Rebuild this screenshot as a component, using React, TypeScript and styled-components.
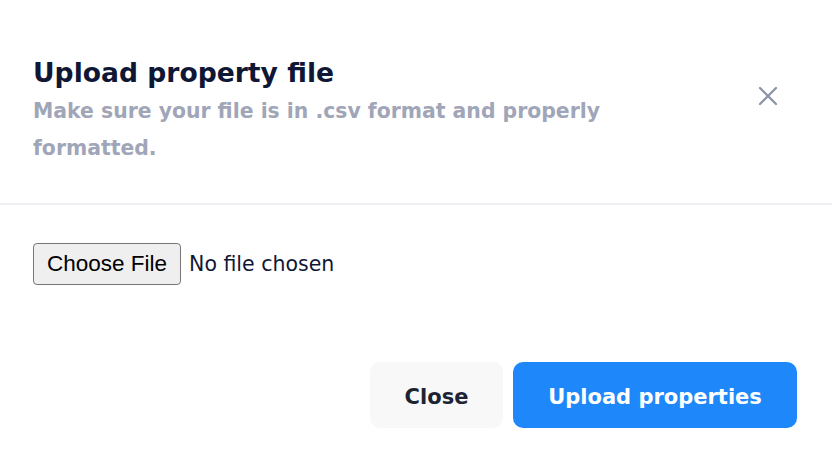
import React from "react";
import styled, { createGlobalStyle } from "styled-components";

const Global = createGlobalStyle`
  html, body { margin: 0; padding: 0; background: #ffffff; }
  body { font-family: "DejaVu Sans", "Open Sans", sans-serif; }
`;

const Modal = styled.div`
  width: 832px;
  height: 468px;
  background: #ffffff;
  display: flex;
  flex-direction: column;
  box-sizing: border-box;
`;

const Header = styled.header`
  display: flex;
  align-items: flex-start;
  justify-content: space-between;
  padding: 55px 50px 0 33px;
  height: 205px;
  box-sizing: border-box;
  border-bottom: 2px solid #eef0f3;
`;

const Titles = styled.div`
  display: flex;
  flex-direction: column;
  max-width: 610px;
`;

const Title = styled.h2`
  margin: 0;
  font-family: "DejaVu Sans", sans-serif;
  font-weight: 700;
  font-size: 26.6px;
  line-height: 36px;
  color: #0f1735;
`;

const Subtitle = styled.p`
  margin: 2px 0 0;
  font-family: "DejaVu Sans", sans-serif;
  font-weight: 700;
  font-size: 20.4px;
  line-height: 37px;
  color: #a0a6b8;
`;

const CloseIcon = styled.button`
  margin-top: 27px;
  width: 28px;
  height: 28px;
  border: none;
  background: transparent;
  padding: 0;
  display: flex;
  align-items: center;
  justify-content: center;
  cursor: pointer;
`;

const Body = styled.div`
  padding: 38px 33px 0;
  display: flex;
  align-items: center;
  gap: 8px;
`;

const FileButton = styled.label`
  display: inline-flex;
  align-items: center;
  justify-content: center;
  height: 42px;
  box-sizing: border-box;
  padding: 0 13px;
  background: #efefef;
  border: 1px solid #767676;
  border-radius: 4px;
  font-family: "Liberation Sans", Arial, sans-serif;
  font-size: 22.5px;
  color: #000000;
`;

const FileName = styled.span`
  font-family: "DejaVu Sans", sans-serif;
  font-size: 20.5px;
  color: #0f1735;
`;

const Footer = styled.footer`
  margin-top: auto;
  padding: 0 35px 40px;
  display: flex;
  justify-content: flex-end;
  gap: 10px;
`;

const Button = styled.button<{ $primary?: boolean }>`
  height: 66px;
  border: none;
  border-radius: 10px;
  padding: 3px 0 0;
  width: ${(p) => (p.$primary ? "284px" : "133px")};
  font-family: "DejaVu Sans", sans-serif;
  font-weight: 700;
  font-size: 21px;
  background: ${(p) => (p.$primary ? "#1e88fb" : "#f8f8f8")};
  color: ${(p) => (p.$primary ? "#ffffff" : "#1d2333")};
  cursor: pointer;
`;

export default function App() {
  return (
    <>
      <Global />
      <Modal>
        <Header>
          <Titles>
            <Title>Upload property file</Title>
            <Subtitle>Make sure your file is in .csv format and properly formatted.</Subtitle>
          </Titles>
          <CloseIcon aria-label="Close">
            <svg width="20" height="20" viewBox="0 0 20 20">
              <path d="M2 2 L18 18 M18 2 L2 18" stroke="#8b90a8" strokeWidth="2.2" strokeLinecap="round" />
            </svg>
          </CloseIcon>
        </Header>
        <Body>
          <FileButton>Choose File</FileButton>
          <FileName>No file chosen</FileName>
        </Body>
        <Footer>
          <Button>Close</Button>
          <Button $primary>Upload properties</Button>
        </Footer>
      </Modal>
    </>
  );
}
